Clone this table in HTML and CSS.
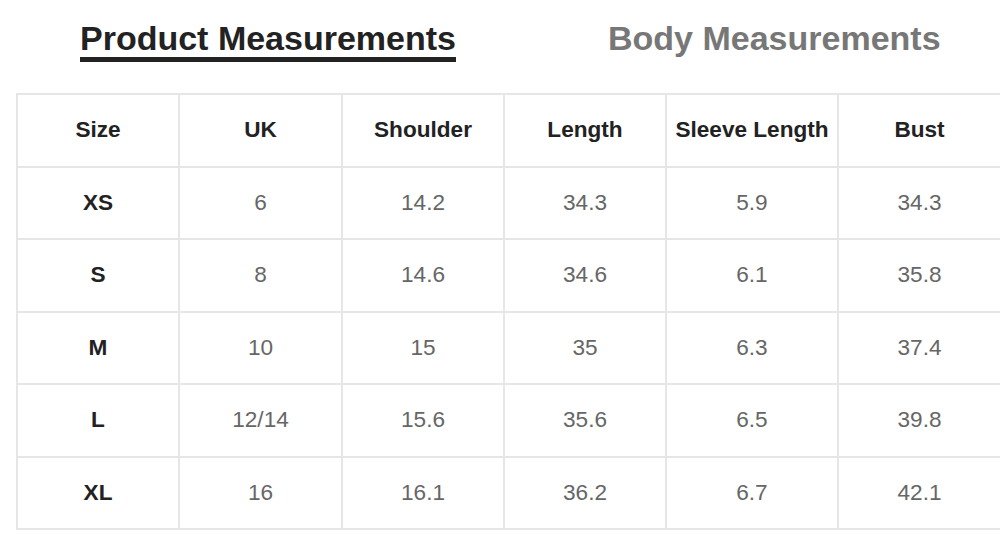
FILE: index.html
```html
<!DOCTYPE html>
<html>
<head>
<meta charset="utf-8">
<link rel="stylesheet" href="styles.css">
</head>
<body>
<div class="tabs">
  <div class="tab active">Product Measurements</div>
  <div class="tab">Body Measurements</div>
</div>
<table class="sizes">
  <colgroup>
    <col class="c1"><col class="c2"><col class="c3"><col class="c4"><col class="c5"><col class="c6">
  </colgroup>
  <thead>
    <tr><th>Size</th><th>UK</th><th>Shoulder</th><th>Length</th><th>Sleeve Length</th><th>Bust</th></tr>
  </thead>
  <tbody>
    <tr><th>XS</th><td>6</td><td>14.2</td><td>34.3</td><td>5.9</td><td>34.3</td></tr>
    <tr><th>S</th><td>8</td><td>14.6</td><td>34.6</td><td>6.1</td><td>35.8</td></tr>
    <tr><th>M</th><td>10</td><td>15</td><td>35</td><td>6.3</td><td>37.4</td></tr>
    <tr><th>L</th><td>12/14</td><td>15.6</td><td>35.6</td><td>6.5</td><td>39.8</td></tr>
    <tr><th>XL</th><td>16</td><td>16.1</td><td>36.2</td><td>6.7</td><td>42.1</td></tr>
  </tbody>
</table>
</body>
</html>
```

FILE: styles.css
```css
html, body {
  margin: 0;
  padding: 0;
  background: #fff;
  font-family: "Liberation Sans", Arial, sans-serif;
}
.tabs {
  display: flex;
  padding: 19px 0 0 80px;
  gap: 152px;
  height: 43px;
}
.tab {
  font-size: 34px;
  font-weight: bold;
  line-height: 38px;
  color: #777;
  height: 38px;
}
.tab.active {
  color: #222;
  border-bottom: 5px solid #222;
}
.sizes {
  margin: 31px 0 0 16px;
  width: 984px;
  border-collapse: collapse;
  table-layout: fixed;
  font-size: 22.6px;
}
.c1 { width: 162px; }
.c2 { width: 163px; }
.c3 { width: 162px; }
.c4 { width: 162px; }
.c5 { width: 172px; }
.c6 { width: 163px; }
.sizes th, .sizes td {
  border: 2px solid #e6e6e6;
  height: 70.5px;
  padding: 0;
  text-align: center;
  vertical-align: middle;
}
.sizes th {
  color: #222;
  font-weight: bold;
}
.sizes td {
  color: #666;
  font-weight: normal;
}
```
